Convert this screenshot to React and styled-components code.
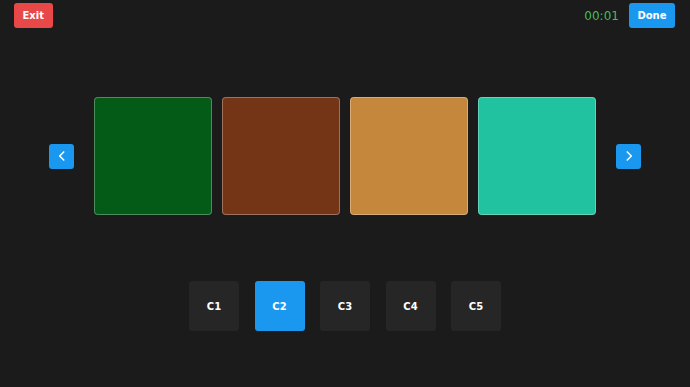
import React, { useState } from 'react';
import styled, { createGlobalStyle } from 'styled-components';

const swatches = ['#035b17', '#743516', '#c4873b', '#20c29f'];
const choices = ['C1', 'C2', 'C3', 'C4', 'C5'];

const Global = createGlobalStyle`
  html, body {
    margin: 0;
    padding: 0;
    background: #1b1b1b;
  }
  body {
    font-family: 'DejaVu Sans', 'Liberation Sans', sans-serif;
  }
`;

function Chevron({ dir }) {
  return (
    <svg width='14' height='14' viewBox='0 0 24 24' fill='none' stroke='#fff' strokeWidth='2.6' strokeLinecap='round' strokeLinejoin='round'>
      {dir === 'left' ? <path d='M15 5l-7 7 7 7' /> : <path d='M9 5l7 7-7 7' />}
    </svg>
  );
}

function App() {
  const [active, setActive] = useState(1);
  return (
    <Screen>
      <Global />
      <TopBar>
        <ActionButton $color='#e84848'>Exit</ActionButton>
        <Right>
          <Timer>00:01</Timer>
          <ActionButton $color='#1a98ef'>Done</ActionButton>
        </Right>
      </TopBar>

      <Carousel>
        <ArrowButton aria-label='previous'>
          <Chevron dir='left' />
        </ArrowButton>
        <Swatches>
          {swatches.map((c) => (
            <Swatch key={c} $color={c} />
          ))}
        </Swatches>
        <ArrowButton aria-label='next'>
          <Chevron dir='right' />
        </ArrowButton>
      </Carousel>

      <Choices>
        {choices.map((label, i) => (
          <Choice key={label} $active={i === active} onClick={() => setActive(i)}>
            {label}
          </Choice>
        ))}
      </Choices>
    </Screen>
  );
}

const Screen = styled.div`
  width: 690px;
  height: 387px;
  background: #1b1b1b;
  display: flex;
  flex-direction: column;
  box-sizing: border-box;
  padding-top: 3px;
`;

const TopBar = styled.div`
  display: flex;
  align-items: center;
  justify-content: space-between;
  padding: 0 15px 0 14px;
  height: 25px;
`;

const Right = styled.div`
  display: flex;
  align-items: center;
  gap: 10px;
`;

const ActionButton = styled.button`
  height: 25px;
  padding: 0 8.5px;
  border: none;
  border-radius: 3px;
  background: ${(p) => p.$color};
  color: #fff;
  font-family: inherit;
  font-size: 10px;
  font-weight: 600;
  cursor: pointer;
`;

const Timer = styled.span`
  color: #40bf5c;
  font-size: 12px;
`;

const Carousel = styled.div`
  display: flex;
  align-items: center;
  justify-content: center;
  gap: 20px;
  margin-top: 69px;
`;

const ArrowButton = styled.button`
  width: 25px;
  height: 25px;
  padding: 0;
  border: none;
  border-radius: 3px;
  background: #1a98ef;
  display: flex;
  align-items: center;
  justify-content: center;
  cursor: pointer;
`;

const Swatches = styled.div`
  display: flex;
  gap: 10px;
`;

const Swatch = styled.div`
  width: 118px;
  height: 118px;
  box-sizing: border-box;
  border-radius: 4px;
  background: ${(p) => p.$color};
  border: 1px solid rgba(255, 255, 255, 0.3);
`;

const Choices = styled.div`
  display: flex;
  justify-content: center;
  gap: 15.5px;
  margin-top: 66px;
`;

const Choice = styled.button`
  width: 50px;
  height: 50px;
  border: none;
  border-radius: 3px;
  background: ${(p) => (p.$active ? '#1a98ef' : '#262626')};
  color: #fff;
  font-family: inherit;
  font-size: 10px;
  font-weight: 700;
  cursor: pointer;
`;

export default App;
